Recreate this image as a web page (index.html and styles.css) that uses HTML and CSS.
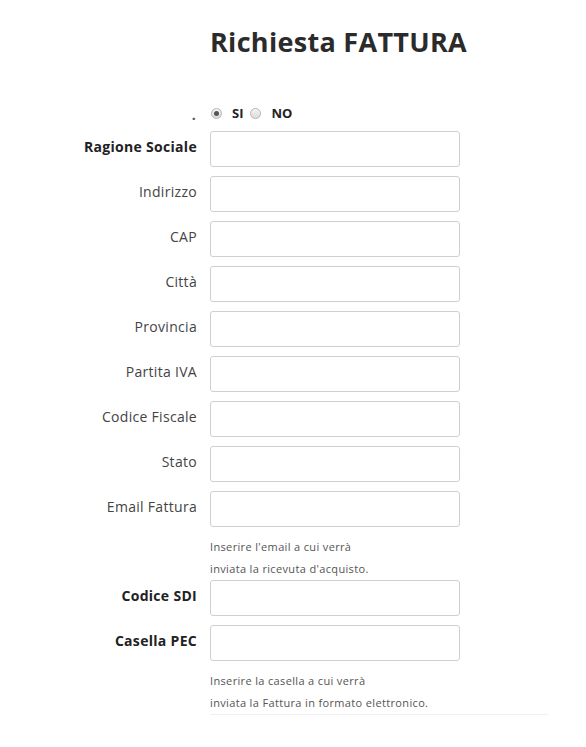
FILE: index.html
```html
<!DOCTYPE html>
<html lang="it">
<head>
<meta charset="utf-8">
<title>Richiesta FATTURA</title>
<link rel="stylesheet" href="styles.css">
</head>
<body>
<div class="page">
  <h1 class="title">Richiesta FATTURA</h1>
  <form class="form">
    <div class="row radio-row">
      <span class="label dot">.</span>
      <div class="field radios">
        <label class="radio"><input type="radio" name="fattura" checked><span>SI</span></label>
        <label class="radio"><input type="radio" name="fattura"><span>NO</span></label>
      </div>
    </div>
    <div class="row"><label class="label strong">Ragione Sociale</label><input class="input" type="text"></div>
    <div class="row"><label class="label">Indirizzo</label><input class="input" type="text"></div>
    <div class="row"><label class="label">CAP</label><input class="input" type="text"></div>
    <div class="row"><label class="label">Città</label><input class="input" type="text"></div>
    <div class="row"><label class="label">Provincia</label><input class="input" type="text"></div>
    <div class="row"><label class="label">Partita IVA</label><input class="input" type="text"></div>
    <div class="row"><label class="label">Codice Fiscale</label><input class="input" type="text"></div>
    <div class="row"><label class="label">Stato</label><input class="input" type="text"></div>
    <div class="row"><label class="label">Email Fattura</label><input class="input" type="text"></div>
    <div class="row help-row"><span class="label"></span><p class="help">Inserire l'email a cui verrà<br>inviata la ricevuta d'acquisto.</p></div>
    <div class="row"><label class="label strong">Codice SDI</label><input class="input" type="text"></div>
    <div class="row"><label class="label strong">Casella PEC</label><input class="input" type="text"></div>
    <div class="row help-row last"><span class="label"></span><p class="help rule">Inserire la casella a cui verrà<br>inviata la Fattura in formato elettronico.</p></div>
  </form>
</div>
</body>
</html>
```
FILE: styles.css
```css
html, body {
  margin: 0;
  padding: 0;
  background: #ffffff;
}
body {
  font-family: "Open Sans", "Noto Sans", sans-serif;
  color: #3a3a3a;
}
.page {
  padding-top: 24px;
}
.title {
  margin: 0 0 0 210px;
  font-size: 27px;
  line-height: 36px;
  font-weight: 700;
  color: #2b2b2b;
  letter-spacing: 0.3px;
}
.form {
  margin-top: 45px;
}
.row {
  display: flex;
  align-items: flex-start;
  column-gap: 13px;
  margin-bottom: 9px;
}
.label {
  width: 197px;
  flex: none;
  text-align: right;
  font-size: 14px;
  line-height: 20px;
  padding-top: 6px;
  color: #444;
  letter-spacing: 0.3px;
}
.label.strong {
  font-weight: 700;
  color: #222;
}
.input {
  box-sizing: border-box;
  width: 250px;
  height: 36px;
  margin: 0;
  border: 1px solid #cfcfcf;
  border-radius: 3px;
  background: #fff;
  font: inherit;
}
.radio-row {
  margin-bottom: 10px;
}
.radio-row .label {
  padding-top: 2px;
  line-height: 16px;
  height: 16px;
  box-sizing: border-box;
  font-weight: 700;
  color: #555;
  padding-right: 1px;
}
.radios {
  display: flex;
  align-items: center;
  height: 16px;
  gap: 6px;
}
.radio {
  display: flex;
  align-items: center;
  gap: 10px;
  font-size: 13px;
  font-weight: 700;
  color: #222;
}
.radio input {
  appearance: none;
  -webkit-appearance: none;
  margin: 0 0 0 1px;
  width: 11px;
  height: 11px;
  border-radius: 50%;
  border: 1px solid #b5b5b5;
  background: linear-gradient(#f4f4f4, #dcdcdc);
  box-sizing: border-box;
  position: relative;
}
.radio input:checked::after {
  content: "";
  position: absolute;
  left: 2px;
  top: 2px;
  width: 5px;
  height: 5px;
  border-radius: 50%;
  background: #555;
}
.help-row {
  margin-top: 0;
  margin-bottom: 0;
}
.help {
  margin: 0;
  font-size: 11px;
  line-height: 22px;
  color: #555;
  letter-spacing: 0.35px;
}
.help.rule {
  width: 338px;
  border-bottom: 1px solid #f0f0f0;
  padding-bottom: 0;
}
```
